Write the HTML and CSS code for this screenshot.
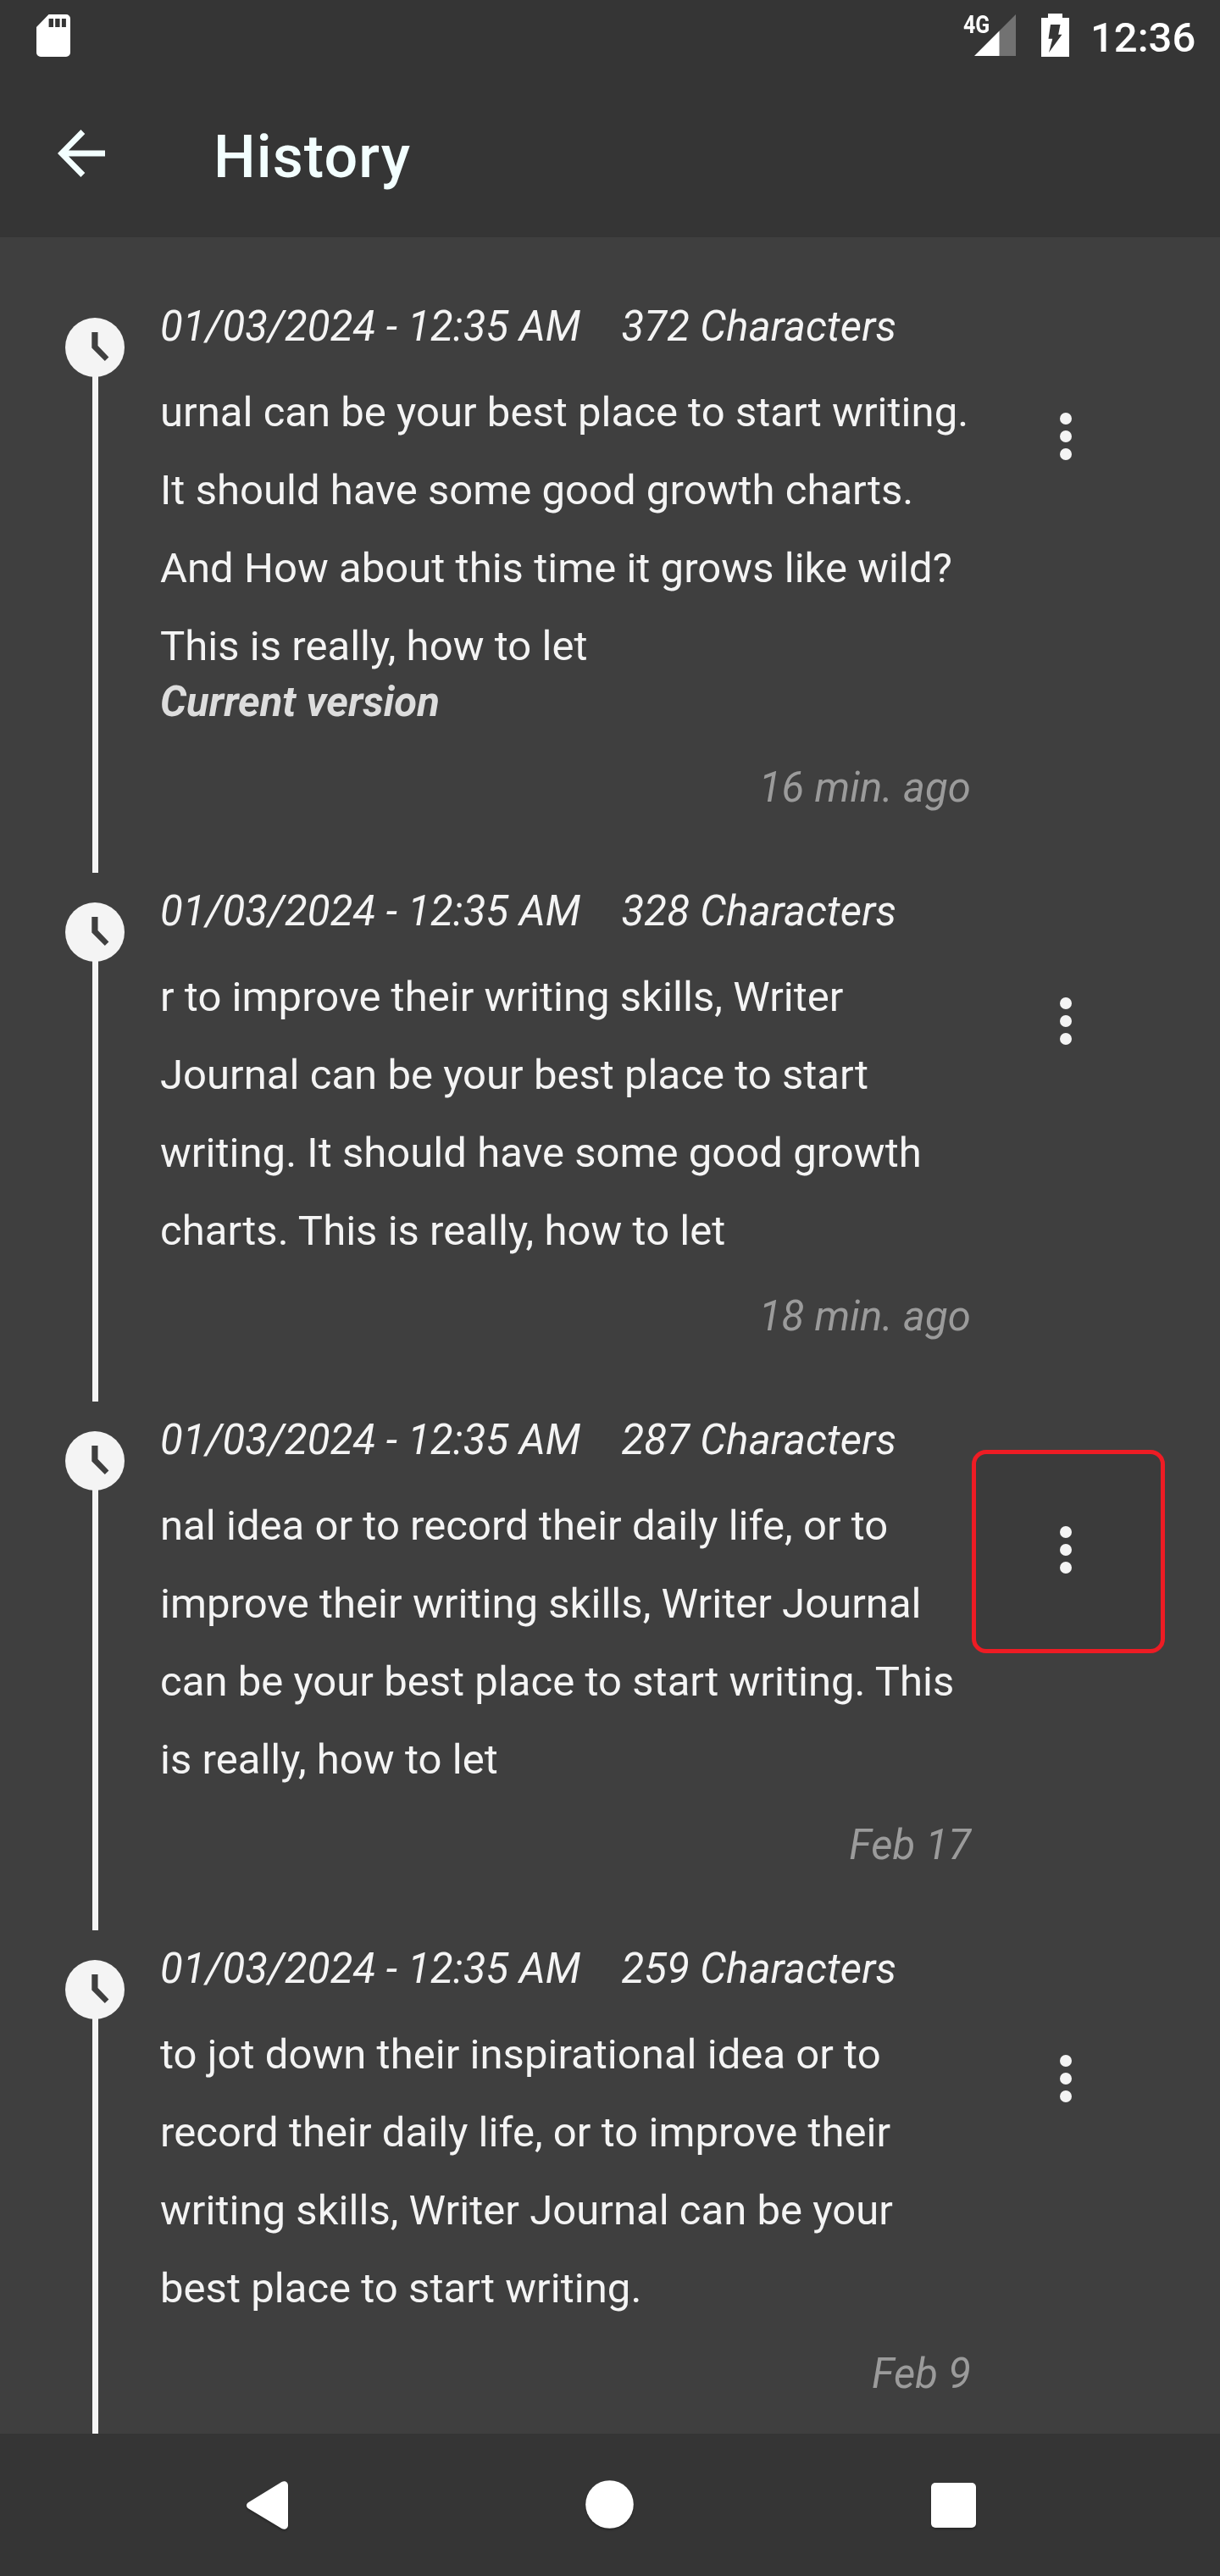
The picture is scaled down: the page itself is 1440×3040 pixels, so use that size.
FILE: index.html
```html
<!DOCTYPE html>
<html lang="en">
<head>
<meta charset="utf-8">
<title>History</title>
<link rel="stylesheet" href="styles.css">
</head>
<body>
<svg class="defs" aria-hidden="true">
  <symbol id="clock" viewBox="0 0 70 70">
    <circle cx="35" cy="35" r="35" fill="#f4f4f4"/>
    <path d="M31.3 16.9h7.2v16.2l12.9 13.3-4.6 4.6-15.5-15.5z" fill="#3f3f3f"/>
  </symbol>
  <symbol id="dots" viewBox="0 0 14 56">
    <g fill="#f4f4f4"><circle cx="7" cy="7" r="7"/><circle cx="7" cy="28" r="7"/><circle cx="7" cy="49" r="7"/></g>
  </symbol>
</svg>

<div class="screen">
  <header class="top">
    <div class="status">
      <svg class="sd" width="40" height="50" viewBox="0 0 40 50"><path fill="#fff" fill-rule="evenodd" d="M14.5 0H35a5 5 0 0 1 5 5v40a5 5 0 0 1-5 5H5a5 5 0 0 1-5-5V15zM14.6 5v10H20V5zM22.2 5v10h5.4V5zM29.9 5v10h5V5z"/></svg>
      <div class="status-right">
        <div class="signal">
          <span class="network">4G</span>
          <svg width="49" height="49" viewBox="0 0 49 49"><path fill="#727272" d="M49 0v49H29V20z"/><path fill="#fff" d="M29.5 19.5V49H0z"/></svg>
        </div>
        <svg class="battery" width="33" height="51" viewBox="0 0 33 51"><path fill="#fff" d="M8 0h17v5h8v46H0V5h8z"/><path fill="#353535" d="M11 13h11.5l-2.3 11.7h4.3L9 46l4.3-16.2H8.5z"/></svg>
        <span class="time">12:36</span>
      </div>
    </div>
    <div class="appbar">
      <svg class="back" width="56" height="56" viewBox="0 0 56 56"><path fill="#f3ffff" d="M0 28 27.4 0l4.900 4.900L13 24.500h43v7H13l19.300 19.600-4.900 4.900z"/></svg>
      <h1 class="title">History</h1>
    </div>
  </header>

  <main class="timeline">
    <article class="entry">
      <div class="rail"><svg class="clock"><use href="#clock"/></svg></div>
      <div class="content">
        <div class="meta"><span>01/03/2024 - 12:35 AM</span><span>372 Characters</span></div>
        <p class="text">urnal can be your best place to start writing.<br>It should have some good growth charts.<br>And How about this time it grows like wild?<br>This is really, how to let</p>
        <div class="current">Current version</div>
        <div class="ago">16 min. ago</div>
      </div>
      <div class="menu"><svg class="dots"><use href="#dots"/></svg></div>
    </article>
    <article class="entry">
      <div class="rail"><svg class="clock"><use href="#clock"/></svg></div>
      <div class="content">
        <div class="meta"><span>01/03/2024 - 12:35 AM</span><span>328 Characters</span></div>
        <p class="text">r to improve their writing skills, Writer<br>Journal can be your best place to start<br>writing. It should have some good growth<br>charts. This is really, how to let</p>
        <div class="ago">18 min. ago</div>
      </div>
      <div class="menu"><svg class="dots"><use href="#dots"/></svg></div>
    </article>
    <article class="entry">
      <div class="rail"><svg class="clock"><use href="#clock"/></svg></div>
      <div class="content">
        <div class="meta"><span>01/03/2024 - 12:35 AM</span><span>287 Characters</span></div>
        <p class="text">nal idea or to record their daily life, or to<br>improve their writing skills, Writer Journal<br>can be your best place to start writing. This<br>is really, how to let</p>
        <div class="ago">Feb 17</div>
      </div>
      <div class="menu"><div class="highlight"></div><svg class="dots"><use href="#dots"/></svg></div>
    </article>
    <article class="entry">
      <div class="rail"><svg class="clock"><use href="#clock"/></svg></div>
      <div class="content">
        <div class="meta"><span>01/03/2024 - 12:35 AM</span><span>259 Characters</span></div>
        <p class="text">to jot down their inspirational idea or to<br>record their daily life, or to improve their<br>writing skills, Writer Journal can be your<br>best place to start writing.</p>
        <div class="ago">Feb 9</div>
      </div>
      <div class="menu"><svg class="dots"><use href="#dots"/></svg></div>
    </article>
  </main>

  <nav class="navbar">
    <svg class="nav-icon" width="49" height="57" viewBox="0 0 49 57"><path fill="#fff" d="M2.400 25 41.500 1C45-1 49 1 49 5v47c0 4-4 6-7.500 4L2.400 32.400C-.8 30.500-.8 27 2.400 25z"/></svg>
    <svg class="nav-icon home" width="57" height="57" viewBox="0 0 57 57"><circle cx="28.500" cy="28.500" r="28.300" fill="#fff"/></svg>
    <svg class="nav-icon recent" width="53" height="53" viewBox="0 0 53 53"><rect width="53" height="53" rx="5" fill="#fff"/></svg>
  </nav>
</div>
</body>
</html>
```
FILE: styles.css
```css
* {
  box-sizing: border-box;
  margin: 0;
  padding: 0;
}

body {
  background: #3f3f3f;
  color: #f4f4f4;
  font-family: Roboto, sans-serif;
  font-size: 49px;
}

svg {
  display: block;
  flex: none;
}

.defs {
  width: 0;
  height: 0;
  position: absolute;
}

.screen {
  display: flex;
  flex-direction: column;
  width: 1440px;
  height: 3040px;
  overflow: hidden;
}

.top {
  flex: none;
  height: 280px;
  background: #353535;
}

.status {
  display: flex;
  justify-content: space-between;
  height: 84px;
  padding: 0 28px 0 43px;
}

.sd {
  margin-top: 17px;
}

.status-right {
  display: flex;
  align-items: flex-start;
}

.signal {
  display: flex;
  padding-top: 17px;
}

.network {
  width: 13px;
  margin-top: -5px;
  color: #fff;
  font-size: 30px;
  font-weight: 700;
  line-height: 34px;
  white-space: nowrap;
  transform: scaleX(0.83);
  transform-origin: left;
}

.battery {
  margin: 16px 25px 0 30px;
}

.time {
  width: 125px;
  margin-top: 16px;
  color: #fff;
  font-weight: 500;
  line-height: 57px;
  white-space: nowrap;
}

.appbar {
  display: flex;
  align-items: center;
  height: 196px;
  padding-left: 68px;
}

.back {
  margin: -3px 128px 0 0;
}

.title {
  padding-top: 6px;
  color: #f3ffff;
  font-size: 70px;
  font-weight: 500;
  letter-spacing: 1.1px;
  line-height: 82px;
}

.timeline {
  flex: 1;
  min-height: 0;
  padding-top: 60px;
  overflow: hidden;
}

.entry {
  display: grid;
  grid-template-columns: 189px 957px 224px;
}

.rail {
  display: flex;
  flex-direction: column;
  padding: 35px 0 0 77px;
}

.clock {
  width: 70px;
  height: 70px;
}

.rail::after {
  content: "";
  flex: 1;
  width: 7px;
  margin: -1px 0 0 32px;
  background: #f4f4f4;
}

.content {
  display: flex;
  flex-direction: column;
  padding: 17px 0 72px;
  line-height: 57px;
  white-space: nowrap;
}

.meta {
  display: flex;
  gap: 48px;
  margin-bottom: 27px;
  font-style: italic;
  letter-spacing: 0.16px;
}

.text {
  letter-spacing: 0.04px;
  line-height: 92px;
}

.current {
  margin: -9px 0 18px;
  color: #dddddd;
  font-style: italic;
  font-weight: 700;
}

.ago {
  margin-top: 26px;
  color: #9b9b9b;
  font-style: italic;
  letter-spacing: 0.1px;
  text-align: right;
}

.menu {
  position: relative;
  display: flex;
  justify-content: center;
  padding-top: 147px;
}

.dots {
  position: relative;
  width: 14px;
  height: 56px;
}

.highlight {
  position: absolute;
  top: 57px;
  left: 1px;
  width: 228px;
  height: 240px;
  border: 5px solid #ee1c24;
  border-radius: 17px;
  background: #3b3b3b;
}

.navbar {
  display: flex;
  flex: none;
  align-items: flex-start;
  height: 168px;
  padding: 56px 0 0 291px;
  background: #353535;
}

.nav-icon {
  filter: drop-shadow(0 2px 1px rgba(0, 0, 0, 0.25));
}

.home {
  margin: -1px 0 0 351px;
}

.recent {
  margin: 2px 0 0 351px;
}
```
